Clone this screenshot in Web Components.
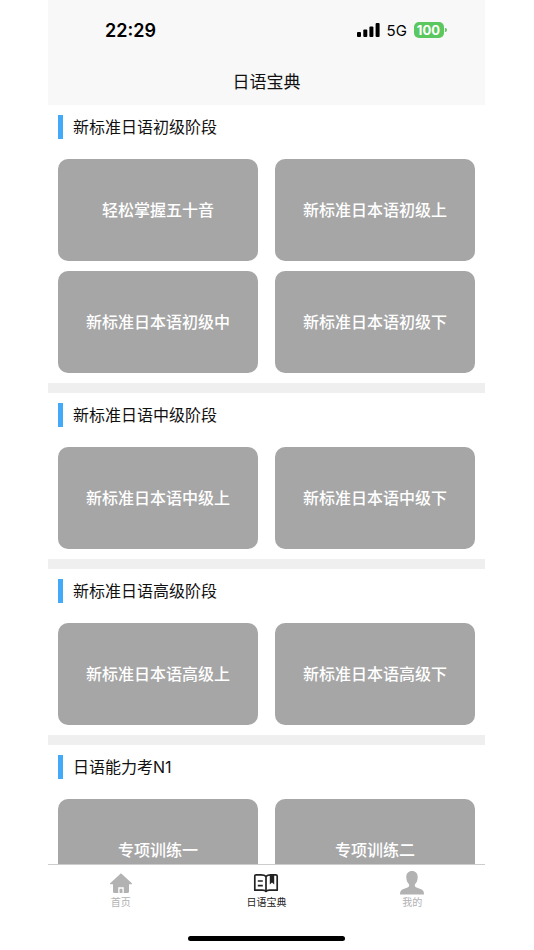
<!DOCTYPE html>
<html lang="zh-CN">
<head>
  <meta charset="utf-8">
  <meta name="viewport" content="width=device-width, initial-scale=1">
  <title>日语宝典</title>
  <style>
    body {
      margin: 0;
      background: #fff;
      color: #111;
      font-family: Inter, "Noto Sans CJK SC", sans-serif;
    }
  </style>
</head>
<body>
  <app-shell>
    <status-bar slot="header" time="22:29" network="5G" battery="100"></status-bar>
    <nav-title slot="header">日语宝典</nav-title>

    <course-section heading="新标准日语初级阶段">
      <course-card>轻松掌握五十音</course-card>
      <course-card>新标准日本语初级上</course-card>
      <course-card>新标准日本语初级中</course-card>
      <course-card>新标准日本语初级下</course-card>
    </course-section>
    <course-section heading="新标准日语中级阶段">
      <course-card>新标准日本语中级上</course-card>
      <course-card>新标准日本语中级下</course-card>
    </course-section>
    <course-section heading="新标准日语高级阶段">
      <course-card>新标准日本语高级上</course-card>
      <course-card>新标准日本语高级下</course-card>
    </course-section>
    <course-section heading="日语能力考N1">
      <course-card>专项训练一</course-card>
      <course-card>专项训练二</course-card>
    </course-section>

    <tab-bar slot="footer">
      <tab-item icon="home" href="#home">首页</tab-item>
      <tab-item icon="book" href="#book" active>日语宝典</tab-item>
      <tab-item icon="user" href="#user">我的</tab-item>
    </tab-bar>
  </app-shell>

  <script>
    const createTemplate = (html) => {
      const template = document.createElement('template');
      template.innerHTML = html;
      return template;
    };

    class BaseElement extends HTMLElement {
      constructor() {
        super();
        const shadowRoot = this.attachShadow({ mode: 'open' });
        shadowRoot.appendChild(this.constructor.template.content.cloneNode(true));
      }
    }

    class AppShell extends BaseElement {
      static template = createTemplate(/* html */ `
        <style>
          :host {
            display: flex;
            flex-direction: column;
            height: 100vh;
            margin: 0 49px 0 48px;
          }

          header {
            background: #f8f8f8;
          }

          main {
            flex: 1;
            min-height: 0;
            overflow-y: auto;
            scrollbar-width: none;
          }
        </style>

        <header><slot name="header"></slot></header>
        <main><slot></slot></main>
        <slot name="footer"></slot>
      `);
    }

    class StatusBar extends BaseElement {
      static template = createTemplate(/* html */ `
        <style>
          :host {
            display: flex;
            align-items: center;
            justify-content: space-between;
            height: 60px;
            padding: 0 38px 0 57px;
            color: #000;
          }

          .time {
            font-size: 18px;
            font-weight: 600;
          }

          .status {
            display: flex;
            align-items: center;
            font-size: 15px;
          }

          .network {
            margin: 0 7px;
          }

          .battery {
            padding: 0 4px 0 3px;
            border-radius: 5px;
            background: #5ac85f;
            color: #fff;
            font-size: 13px;
            font-weight: 700;
            line-height: 16px;
          }

          .tip {
            width: 2px;
            height: 4px;
            margin-left: 1px;
            border-radius: 0 2px 2px 0;
            background: #5ac85f;
          }
        </style>

        <span class="time"></span>
        <span class="status">
          <svg width="23" height="14" viewBox="0 0 23 14" aria-hidden="true">
            <rect x="0" y="9" width="4" height="5" rx="1" />
            <rect x="6.3" y="6.5" width="4" height="7.5" rx="1" />
            <rect x="12.4" y="3.5" width="4" height="10.5" rx="1" />
            <rect x="18.6" y="0" width="4" height="14" rx="1" />
          </svg>
          <span class="network"></span>
          <span class="battery"></span>
          <span class="tip"></span>
        </span>
      `);

      connectedCallback() {
        ['time', 'network', 'battery'].forEach((name) => {
          this.shadowRoot.querySelector(`.${name}`).textContent = this.getAttribute(name);
        });
      }
    }

    class NavTitle extends BaseElement {
      static template = createTemplate(/* html */ `
        <style>
          :host {
            display: block;
          }

          h1 {
            margin: 0;
            font-size: 17px;
            font-weight: 400;
            line-height: 45px;
            text-align: center;
          }
        </style>

        <h1><slot></slot></h1>
      `);
    }

    class CourseSection extends BaseElement {
      static template = createTemplate(/* html */ `
        <style>
          :host {
            display: block;
            padding: 10px;
            border-bottom: 10px solid #efefef;
          }

          h2 {
            margin: 0 0 20px;
            padding-left: 10px;
            border-left: 5px solid #43aaf8;
            font-size: 16px;
            font-weight: 400;
            line-height: 24px;
          }

          .cards {
            display: grid;
            grid-template-columns: 1fr 1fr;
            gap: 10px 17px;
          }
        </style>

        <h2></h2>
        <div class="cards"><slot></slot></div>
      `);

      connectedCallback() {
        this.shadowRoot.querySelector('h2').textContent = this.getAttribute('heading');
      }
    }

    class CourseCard extends BaseElement {
      static template = createTemplate(/* html */ `
        <style>
          :host {
            display: block;
          }

          button {
            width: 100%;
            height: 102px;
            padding: 0 0 2px;
            border: 0;
            border-radius: 10px;
            background: #a6a6a6;
            color: #fff;
            font: inherit;
            font-size: 16px;
            font-weight: 500;
            cursor: pointer;
          }
        </style>

        <button type="button"><slot></slot></button>
      `);
    }

    class TabBar extends BaseElement {
      static template = createTemplate(/* html */ `
        <style>
          :host {
            display: block;
            border-top: 1px solid #ccc;
            background: #fff;
          }

          nav {
            display: grid;
            grid-template-columns: repeat(3, 1fr);
            height: 71px;
          }

          .indicator {
            width: 36%;
            height: 5px;
            margin: 0 auto 9px;
            border-radius: 3px;
            background: #000;
          }
        </style>

        <nav><slot></slot></nav>
        <div class="indicator"></div>
      `);
    }

    const icons = {
      home: `
        <path fill="currentColor" d="M13 2.2 23.8 12.2c.4.5.2 1-.4 1H21v7.6c0 .7-.4 1.1-1.1 1.1H6.1c-.7 0-1.1-.4-1.1-1.1v-7.6H2.6c-.6 0-.8-.5-.4-1Z" />
        <path fill="none" stroke="#fff" stroke-width="1.3" d="M10.900 22v-5h4.200v5" />`,
      book: `
        <g fill="none" stroke="currentColor" stroke-width="1.7" stroke-linejoin="round">
          <path d="M13 5.400C11.800 4.100 10.200 3.800 8 3.800H3.200c-1 0-1.400.5-1.400 1.400v14h7.800c1.600 0 2.700.2 3.400 1.200.7-1 1.800-1.200 3.400-1.200h7.800v-14c0-.9-.4-1.400-1.400-1.400H18c-2.200 0-3.800.3-5 1.600Z" />
          <path d="M13 5.400v15M4.800 10h5M4.800 14.600h5" />
        </g>
        <path fill="currentColor" d="M16.800 3.200h4.400v10.400L19 11.500l-2.200 2.100Z" />`,
      user: `
        <path fill="currentColor" d="M13 0c3.600 0 5.700 2.400 5.700 6 0 3.200-1 5.600-2.500 7.100-.7.900-.5 2.500.7 3.100l5.200 2c2 .8 2.900 2.200 2.900 5.300H1c0-3.100.9-4.500 2.900-5.300l5.200-2c1.200-.6 1.400-2.200.7-3.100C8.300 11.600 7.300 9.200 7.300 6 7.300 2.400 9.400 0 13 0Z" />`,
    };

    class TabItem extends BaseElement {
      static template = createTemplate(/* html */ `
        <style>
          :host {
            display: block;
            color: #b2b2b2;
          }

          :host([active]) {
            color: #222;
          }

          a {
            display: flex;
            flex-direction: column;
            align-items: center;
            padding-top: 6px;
            color: inherit;
            font-size: 10px;
            line-height: 14px;
            text-decoration: none;
          }
        </style>

        <a>
          <svg width="26" height="24" viewBox="0 0 26 24" aria-hidden="true"></svg>
          <span><slot></slot></span>
        </a>
      `);

      connectedCallback() {
        const link = this.shadowRoot.querySelector('a');

        link.href = this.getAttribute('href');
        if (this.hasAttribute('active')) {
          link.setAttribute('aria-current', 'page');
        }

        this.shadowRoot.querySelector('svg').innerHTML = icons[this.getAttribute('icon')];
      }
    }

    customElements.define('app-shell', AppShell);
    customElements.define('status-bar', StatusBar);
    customElements.define('nav-title', NavTitle);
    customElements.define('course-section', CourseSection);
    customElements.define('course-card', CourseCard);
    customElements.define('tab-bar', TabBar);
    customElements.define('tab-item', TabItem);
  </script>
</body>
</html>
